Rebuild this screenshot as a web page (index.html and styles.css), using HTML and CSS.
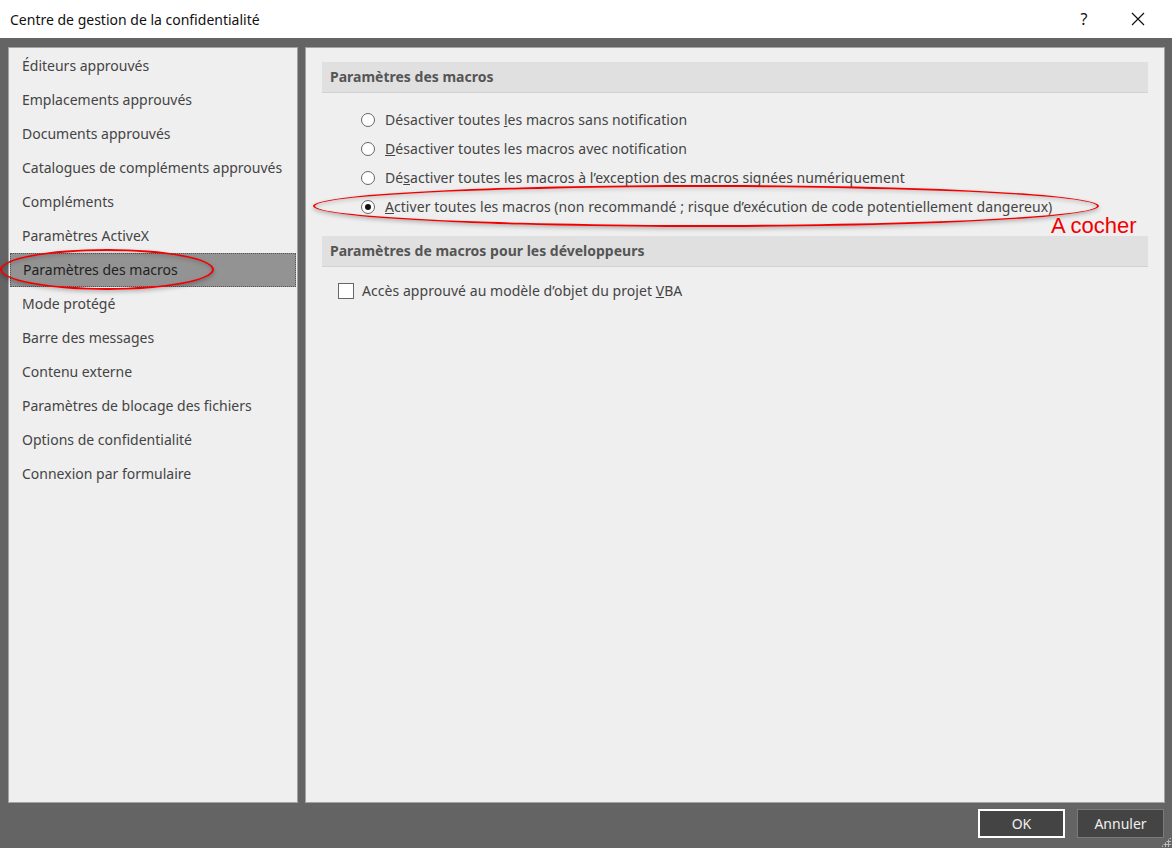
FILE: index.html
```
<!DOCTYPE html>
<html lang="fr">
<head>
  <meta charset="UTF-8" />
  <title>Centre de gestion de la confidentialité</title>
  <link rel="stylesheet" href="styles.css">
</head>
<body>

  <div class="dialog">
    <div class="titlebar">
      <span class="title">Centre de gestion de la confidentialité</span>
      <span class="tb-btn help">?</span>
      <span class="tb-btn close">
        <svg width="14" height="14" viewBox="0 0 14 14"><path d="M1 1 L13 13 M13 1 L1 13" stroke="#111" stroke-width="1.2" fill="none"/></svg>
      </span>
    </div>

    <div class="main">
      <ul class="nav">
        <li>Éditeurs approuvés</li>
        <li>Emplacements approuvés</li>
        <li>Documents approuvés</li>
        <li>Catalogues de compléments approuvés</li>
        <li>Compléments</li>
        <li>Paramètres ActiveX</li>
        <li class="selected">Paramètres des macros</li>
        <li>Mode protégé</li>
        <li>Barre des messages</li>
        <li>Contenu externe</li>
        <li>Paramètres de blocage des fichiers</li>
        <li>Options de confidentialité</li>
        <li>Connexion par formulaire</li>
      </ul>

      <div class="content">
        <div class="section-head">Paramètres des macros</div>
        <div class="options">
          <label class="radio-row"><span class="radio"></span><span>Désactiver toutes <u>l</u>es macros sans notification</span></label>
          <label class="radio-row"><span class="radio"></span><span><u>D</u>ésactiver toutes les macros avec notification</span></label>
          <label class="radio-row"><span class="radio"></span><span>Dé<u>s</u>activer toutes les macros à l’exception des macros signées numériquement</span></label>
          <label class="radio-row"><span class="radio checked"></span><span><u>A</u>ctiver toutes les macros (non recommandé ; risque d’exécution de code potentiellement dangereux)</span></label>
        </div>
        <div class="section-head">Paramètres de macros pour les développeurs</div>
        <label class="check-row"><span class="checkbox"></span><span>Accès approuvé au modèle d’objet du projet <u>V</u>BA</span></label>
      </div>
    </div>

    <div class="footer">
      <button class="btn default">OK</button>
      <button class="btn">Annuler</button>
      <span class="grip"></span>
    </div>

    <!-- annotations drawn over the screenshot -->
    <div class="mark mark-nav"></div>
    <div class="mark mark-option"></div>
    <div class="note">A cocher</div>
  </div>

</body>
</html>
```

FILE: styles.css
```
:root {
  --frame: #646464;
  --panel: #efefef;
  --panel-border: #a3a3a3;
  --text: #444;
  --head-bg: #e0e0e0;
  --red: #f00000;
}

* {
  box-sizing: border-box;
  margin: 0;
  padding: 0;
}

body {
  font-family: "Segoe UI", "Noto Sans", Arial, sans-serif;
  background-color: var(--frame);
  width: 1172px;
  height: 848px;
  overflow: hidden;
}

.dialog {
  position: relative;
  height: 848px;
  display: flex;
  flex-direction: column;
}

.titlebar {
  height: 38px;
  background: #fff;
  display: flex;
  align-items: center;
  padding-left: 10px;
  font-size: 14px;
  color: #111;
}

.title {
  flex: 1;
}

.tb-btn {
  width: 46px;
  text-align: center;
  font-size: 16px;
  color: #111;
}

.help {
  margin-right: 8px;
}

.close {
  display: flex;
  justify-content: center;
  margin-right: 11px;
}

.main {
  display: flex;
  gap: 7px;
  padding: 9px 7px 0 8px;
  height: 765px;
}

.nav {
  list-style: none;
  width: 290px;
  background: var(--panel);
  border: 1px solid var(--panel-border);
  padding-top: 1px;
}

.nav li {
  height: 34px;
  line-height: 34px;
  padding-left: 13px;
  font-size: 14px;
  color: var(--text);
}

.nav li.selected {
  margin: 0 1px;
  padding-left: 12px;
  background: #939393;
  border: 1px dotted #555;
  line-height: 32px;
  color: #222;
}

.content {
  flex: 1;
  background: var(--panel);
  border: 1px solid var(--panel-border);
  padding: 14px 16px 0 16px;
}

.section-head {
  height: 31px;
  line-height: 30px;
  background: var(--head-bg);
  border-bottom: 1px solid #d2d2d2;
  padding-left: 8px;
  font-size: 14px;
  font-weight: bold;
  color: #555;
}

.options {
  padding: 12px 0 15px 39px;
}

.radio-row, .check-row {
  display: flex;
  align-items: center;
  height: 29px;
  font-size: 14px;
  letter-spacing: 0.05px;
  color: var(--text);
}

.radio {
  width: 14px;
  height: 14px;
  border: 1px solid #666;
  border-radius: 50%;
  background: #fff;
  margin-right: 10px;
  position: relative;
}

.radio.checked::after {
  content: "";
  position: absolute;
  left: 3px;
  top: 3px;
  width: 6px;
  height: 6px;
  border-radius: 50%;
  background: #111;
}

.check-row {
  margin-top: 9px;
  padding-left: 16px;
}

.checkbox {
  width: 16px;
  height: 16px;
  border: 1px solid #666;
  background: #fff;
  margin-right: 8px;
}

.footer {
  flex: 1;
  display: flex;
  justify-content: flex-end;
  align-items: flex-start;
  gap: 12px;
  padding: 6px 8px 0 0;
  position: relative;
}

.btn {
  width: 87px;
  height: 29px;
  background: #444;
  border: 1px solid #7a7a7a;
  color: #f0f0f0;
  font-family: inherit;
  font-size: 14px;
}

.btn.default {
  border: 2px solid #fff;
}

.grip {
  position: absolute;
  right: 1px;
  bottom: 1px;
  width: 10px;
  height: 10px;
  background:
    radial-gradient(circle, #bbb 1px, transparent 1.3px) 0 0 / 3px 3px;
  clip-path: polygon(100% 0, 100% 100%, 0 100%);
}

.mark {
  position: absolute;
  border: 2px solid var(--red);
  border-radius: 50%;
  box-shadow: 0 2px 4px rgba(0, 0, 0, 0.25), inset 0 2px 4px rgba(0, 0, 0, 0.15);
}

.mark-nav {
  left: 0;
  top: 249px;
  width: 214px;
  height: 41px;
}

.mark-option {
  left: 313px;
  top: 185px;
  width: 786px;
  height: 42px;
}

.note {
  position: absolute;
  left: 1051px;
  top: 213px;
  font-family: "Liberation Sans", Arial, sans-serif;
  font-size: 22px;
  color: var(--red);
}
```
